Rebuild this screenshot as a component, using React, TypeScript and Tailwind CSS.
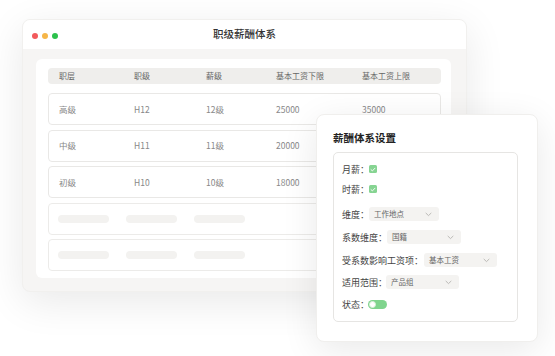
import React from "react";

const font = { fontFamily: '"Noto Sans CJK SC", "Noto Sans", sans-serif' };

const rows = [
  ["高级", "H12", "12级", "25000", "35000"],
  ["中级", "H11", "11级", "20000", "35000"],
  ["初级", "H10", "10级", "18000", "35000"],
];

const Chevron = () => (
  <svg width="7" height="5" viewBox="0 0 7 5" fill="none" className="shrink-0">
    <path d="M1 1.2 L3.5 3.6 L6 1.2" stroke="#b5b3b0" strokeWidth="0.9" strokeLinecap="round" strokeLinejoin="round" />
  </svg>
);

const Select = ({ text, w }: { text: string; w: string }) => (
  <div className={`flex h-[14px] shrink-0 items-center justify-between rounded-[3px] bg-[#f4f3f1] pl-[5px] pr-[7px] ${w}`}>
    <span className="whitespace-nowrap text-[7.5px] leading-none text-[#666]">{text}</span>
    <Chevron />
  </div>
);

const Check = () => (
  <div className="flex h-[8px] w-[8px] shrink-0 items-center justify-center rounded-[1.5px] bg-[#86d492]">
    <svg width="6" height="5" viewBox="0 0 6 5" fill="none">
      <path d="M1 2.6 L2.4 3.9 L5 1.2" stroke="white" strokeWidth="0.9" strokeLinecap="round" strokeLinejoin="round" />
    </svg>
  </div>
);

const Label = ({ text, w }: { text: string; w: string }) => (
  <span className={`shrink-0 whitespace-nowrap ${w}`}>{text}</span>
);

export default function App() {
  const cols = ["w-[75px]", "w-[72px]", "w-[70px]", "w-[86px]", "flex-1"];
  return (
    <div className="relative h-[356px] w-[555px] overflow-hidden bg-white" style={font}>
      <div className="pl-[22px] pt-[19px]">
        <div className="flex h-[273px] w-[445px] flex-col overflow-hidden rounded-[8px] border border-[#f1f0ee] bg-[#f6f5f4] shadow-[0_10px_40px_rgba(0,0,0,0.09)]">
          <div className="relative flex h-[29px] shrink-0 items-center justify-center bg-white">
            <div className="absolute left-[9px] top-[13px] flex gap-[4px]">
              <div className="h-[6px] w-[6px] rounded-full bg-[#f25a5c]" />
              <div className="h-[6px] w-[6px] rounded-full bg-[#f6b648]" />
              <div className="h-[6px] w-[6px] rounded-full bg-[#2cc14c]" />
            </div>
            <span className="text-[10.5px] font-medium leading-none text-[#333]">职级薪酬体系</span>
          </div>
          <div className="flex-1 pl-[13px] pr-[15px] pt-[10px] pb-[13px]">
            <div className="h-full rounded-[6px] bg-white pl-[12px] pr-[10px] pt-[9px]">
              <div className="flex h-[16px] items-center rounded-[4px] bg-[#efeeec] pl-[11px] text-[8px] leading-none text-[#666]">
                {["职层", "职级", "薪级", "基本工资下限", "基本工资上限"].map((h, i) => (
                  <span key={h} className={cols[i]}>{h}</span>
                ))}
              </div>
              <div className="mt-[9px] flex flex-col gap-[4.5px]">
                {rows.map((r) => (
                  <div key={r[0]} className="flex h-[32px] items-center rounded-[4px] border border-[#e9e8e6] pl-[10px] text-[8.5px] leading-none text-[#888]">
                    {r.map((c, i) => (
                      <span key={i} className={cols[i]}>{c}</span>
                    ))}
                  </div>
                ))}
                {[0, 1].map((k) => (
                  <div key={k} className="flex h-[32px] items-center gap-[17px] rounded-[4px] border border-[#ecebe9] pl-[9px]">
                    <div className="h-[8px] w-[51px] rounded-full bg-[#f3f2f0]" />
                    <div className="h-[8px] w-[51px] rounded-full bg-[#f3f2f0]" />
                    <div className="h-[8px] w-[51px] rounded-full bg-[#f3f2f0]" />
                  </div>
                ))}
              </div>
            </div>
          </div>
        </div>
      </div>

      <div className="absolute left-[316px] top-[114px] h-[228px] w-[222px] rounded-[8px] border border-[#f0efed] bg-white px-[16px] pt-[17px] shadow-[0_8px_36px_rgba(0,0,0,0.09)]">
        <div className="text-[10.5px] font-bold leading-[12px] text-[#222]">薪酬体系设置</div>
        <div className="mt-[8px] h-[170px] w-[185px] rounded-[5px] border border-[#e6e5e3] pl-[8px] pt-[9px] text-[9px] leading-none text-[#444]">
          <div className="flex h-[14px] items-center">
            <Label text="月薪：" w="w-[27px]" />
            <Check />
          </div>
          <div className="mt-[6px] flex h-[14px] items-center">
            <Label text="时薪：" w="w-[27px]" />
            <Check />
          </div>
          <div className="mt-[11px] flex h-[14px] items-center">
            <Label text="维度：" w="w-[27px]" />
            <Select text="工作地点" w="w-[70px]" />
          </div>
          <div className="mt-[9px] flex h-[14px] items-center">
            <Label text="系数维度：" w="w-[45px]" />
            <Select text="国籍" w="w-[74px]" />
          </div>
          <div className="mt-[9px] flex h-[14px] items-center">
            <Label text="受系数影响工资项：" w="w-[82px]" />
            <Select text="基本工资" w="w-[73px]" />
          </div>
          <div className="mt-[8px] flex h-[14px] items-center">
            <Label text="适用范围：" w="w-[44px]" />
            <Select text="产品组" w="w-[73px]" />
          </div>
          <div className="mt-[8px] flex h-[14px] items-center">
            <Label text="状态：" w="w-[26px]" />
            <div className="flex h-[9px] w-[19px] shrink-0 items-center rounded-full bg-[#7fd48d] pl-[1px]">
              <div className="h-[7px] w-[7px] rounded-full border border-[#d9efd9] bg-white" />
            </div>
          </div>
        </div>
      </div>
    </div>
  );
}
